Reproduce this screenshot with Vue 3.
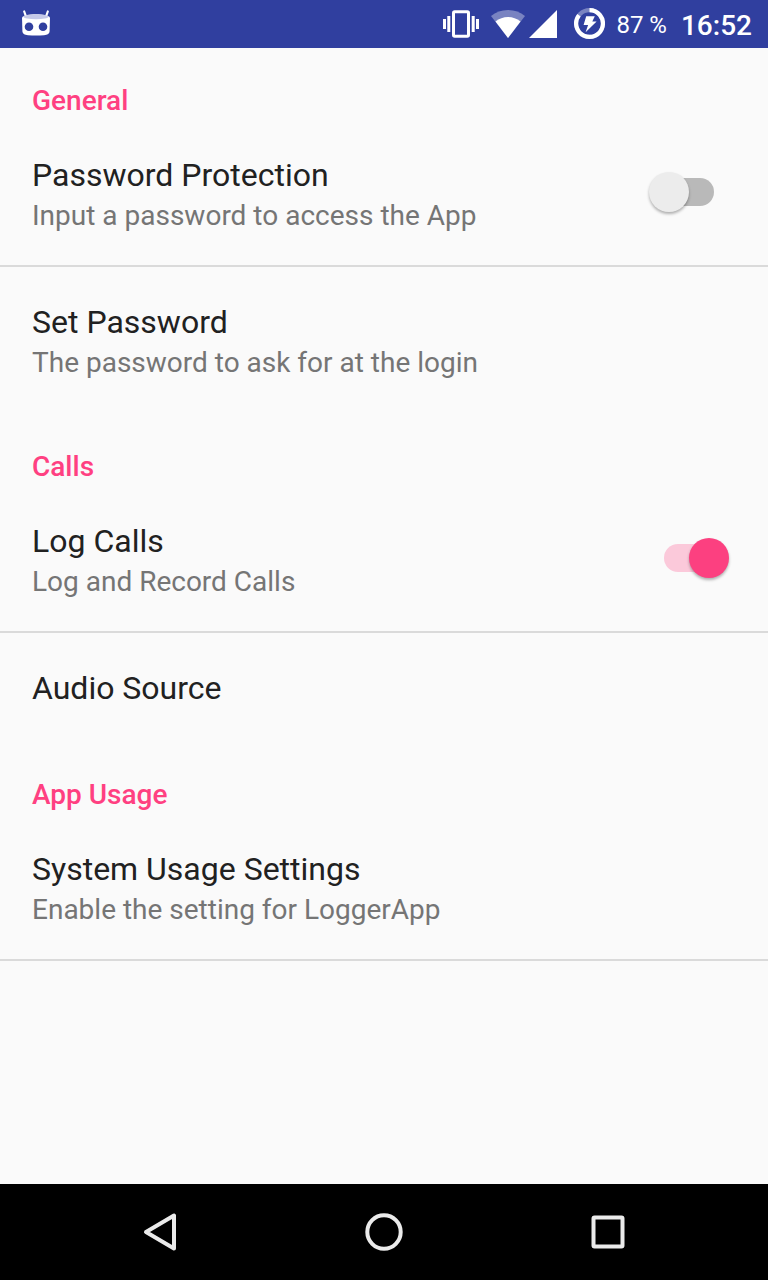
<script setup>
import { reactive } from 'vue'

const sections = reactive([
  {
    title: 'General',
    items: [
      { id: 'protect', title: 'Password Protection', summary: 'Input a password to access the App', toggle: true, on: false, divider: true },
      { id: 'password', title: 'Set Password', summary: 'The password to ask for at the login' },
    ],
  },
  {
    title: 'Calls',
    items: [
      { id: 'log', title: 'Log Calls', summary: 'Log and Record Calls', toggle: true, on: true, divider: true },
      { id: 'audio', title: 'Audio Source' },
    ],
  },
  {
    title: 'App Usage',
    items: [
      { id: 'usage', title: 'System Usage Settings', summary: 'Enable the setting for LoggerApp', divider: true },
    ],
  },
])
</script>

<template>
  <div class="screen">
    <header class="status">
      <svg width="28" height="28" viewBox="0 0 28 28" aria-hidden="true">
        <path d="M2.200 1.500 4 6.500M25.800 1.500 24 6.500" stroke="#fff" stroke-width="2.200" stroke-linecap="round" />
        <path d="M0 7.500C2 3 26 3 28 7.500L27.600 21C27.500 24 25.500 24.800 22 25.200Q14 26 6 25.200C2.500 24.800 .5 24 .4 21Z" fill="#fff" />
        <ellipse cx="14" cy="6.800" rx="12.500" ry="2.500" fill="#c5c9e8" />
        <circle cx="7" cy="16.700" r="4.300" fill="#303f9f" />
        <circle cx="21" cy="16.700" r="4.300" fill="#303f9f" />
      </svg>
      <div class="indicators">
        <svg width="36" height="28" viewBox="0 0 36 28" aria-hidden="true">
          <rect x="10.500" y="1.700" width="15" height="24.500" rx="1.200" fill="none" stroke="#fff" stroke-width="3" />
          <path d="M0 9h3v10H0zM4.300 6h3v16h-3zM28.700 6h3v16h-3zM33 9h3v10h-3z" fill="#fff" />
        </svg>
        <svg class="wifi" width="34" height="28" viewBox="0 0 34 28" aria-hidden="true">
          <path d="M17 28 0 6Q7 0 17 0T34 6Z" fill="#7983c1" />
          <path d="M17 28 4.500 11.500Q10 7 17 7T29.500 11.500Z" fill="#fff" />
        </svg>
        <svg class="signal" width="28" height="28" viewBox="0 0 28 28" aria-hidden="true">
          <path d="M28 0V28H0Z" fill="#fff" />
        </svg>
        <svg class="battery" width="32" height="32" viewBox="0 0 32 32" aria-hidden="true">
          <circle cx="16.500" cy="15.500" r="13.400" fill="none" stroke="#7983c1" stroke-width="4.200" />
          <path d="M16.500 2.100A13.400 13.400 0 1 1 6 7.200" fill="none" stroke="#fff" stroke-width="4.200" />
          <path d="M13.200 8.200h8.600L19.300 13.400h4.300L12.600 24.300l2.500-7.300h-4.500Z" fill="#fff" />
        </svg>
        <span class="percent">87 %</span>
        <time class="time">16:52</time>
      </div>
    </header>

    <main class="settings">
      <section v-for="section in sections" :key="section.title">
        <h2 class="heading">{{ section.title }}</h2>
        <component
          :is="item.toggle ? 'label' : 'button'"
          v-for="item in section.items"
          :key="item.id"
          class="row"
          :class="{ divided: item.divider, single: !item.summary }"
          :for="item.toggle ? item.id : undefined"
          :type="item.toggle ? undefined : 'button'"
        >
          <span class="text">
            <span class="title">{{ item.title }}</span>
            <span v-if="item.summary" class="summary">{{ item.summary }}</span>
          </span>
          <input v-if="item.toggle" :id="item.id" v-model="item.on" class="switch" type="checkbox" role="switch" />
        </component>
      </section>
    </main>

    <nav class="navbar" aria-label="System">
      <button type="button" aria-label="Back">
        <svg width="40" height="40" viewBox="0 0 40 40"><path d="M34 3.500V36.500L6 20Z" /></svg>
      </button>
      <button type="button" aria-label="Home">
        <svg width="40" height="40" viewBox="0 0 40 40"><circle cx="20" cy="20" r="16.700" /></svg>
      </button>
      <button type="button" aria-label="Recent apps">
        <svg width="40" height="40" viewBox="0 0 40 40"><rect x="5.500" y="5.500" width="29" height="29" rx="1" /></svg>
      </button>
    </nav>
  </div>
</template>

<style>
body {
  margin: 0;
}
</style>

<style scoped>
.screen {
  display: flex;
  flex-direction: column;
  min-height: 100vh;
  background: #fafafa;
  font-family: Roboto, sans-serif;
}
.status {
  display: flex;
  align-items: center;
  justify-content: space-between;
  height: 48px;
  padding: 0 16px 0 22px;
  background: #303f9f;
  color: #fff;
}
.indicators {
  display: flex;
  align-items: center;
}
.wifi {
  margin-left: 12px;
}
.signal {
  margin-left: 4px;
}
.battery {
  margin-left: 16px;
}
.percent {
  margin-left: 11px;
  padding-top: 2px;
  font-size: 24px;
  line-height: 32px;
}
.time {
  margin-left: 14px;
  padding-top: 4px;
  font-size: 28px;
  font-weight: 500;
  line-height: 32px;
}
.settings {
  flex: 1;
}
.heading {
  margin: 0;
  padding: 36px 32px 2px;
  color: #ff4081;
  font-size: 28px;
  font-weight: 500;
  line-height: 34px;
}
.row {
  display: flex;
  align-items: center;
  justify-content: space-between;
  box-sizing: border-box;
  width: 100%;
  padding: 36px 39px 34px 32px;
  border: 0;
  background: none;
  font-family: inherit;
  text-align: left;
  cursor: pointer;
}
.divided {
  padding-bottom: 32px;
  border-bottom: 2px solid #dadada;
}
.single {
  padding-bottom: 35px;
}
.text {
  display: flex;
  flex-direction: column;
  gap: 5px;
}
.title {
  color: #212121;
  font-size: 32px;
  line-height: 38px;
}
.summary {
  color: #757575;
  font-size: 28px;
  line-height: 34px;
}
.switch {
  appearance: none;
  display: flex;
  align-items: center;
  flex: none;
  position: relative;
  width: 80px;
  height: 40px;
  margin: 0 0 5px;
  cursor: pointer;
}
.switch::before {
  content: '';
  width: 50px;
  height: 28px;
  margin: 0 auto;
  border-radius: 14px;
  background: #b9b9b9;
}
.switch::after {
  content: '';
  position: absolute;
  top: 0;
  left: 0;
  width: 40px;
  height: 40px;
  border-radius: 50%;
  background: #ececec;
  box-shadow: 0 2px 3px rgba(0, 0, 0, 0.3);
}
.switch:checked::before {
  background: #fbc9da;
}
.switch:checked::after {
  left: 40px;
  background: #fc4080;
}
.navbar {
  display: flex;
  height: 96px;
  padding: 0 48px;
  background: #000;
}
.navbar button {
  display: flex;
  flex: 1;
  align-items: center;
  justify-content: center;
  padding: 0;
  border: 0;
  background: none;
}
.navbar svg {
  fill: none;
  stroke: #ebebeb;
  stroke-width: 4;
  stroke-linejoin: round;
}
</style>
